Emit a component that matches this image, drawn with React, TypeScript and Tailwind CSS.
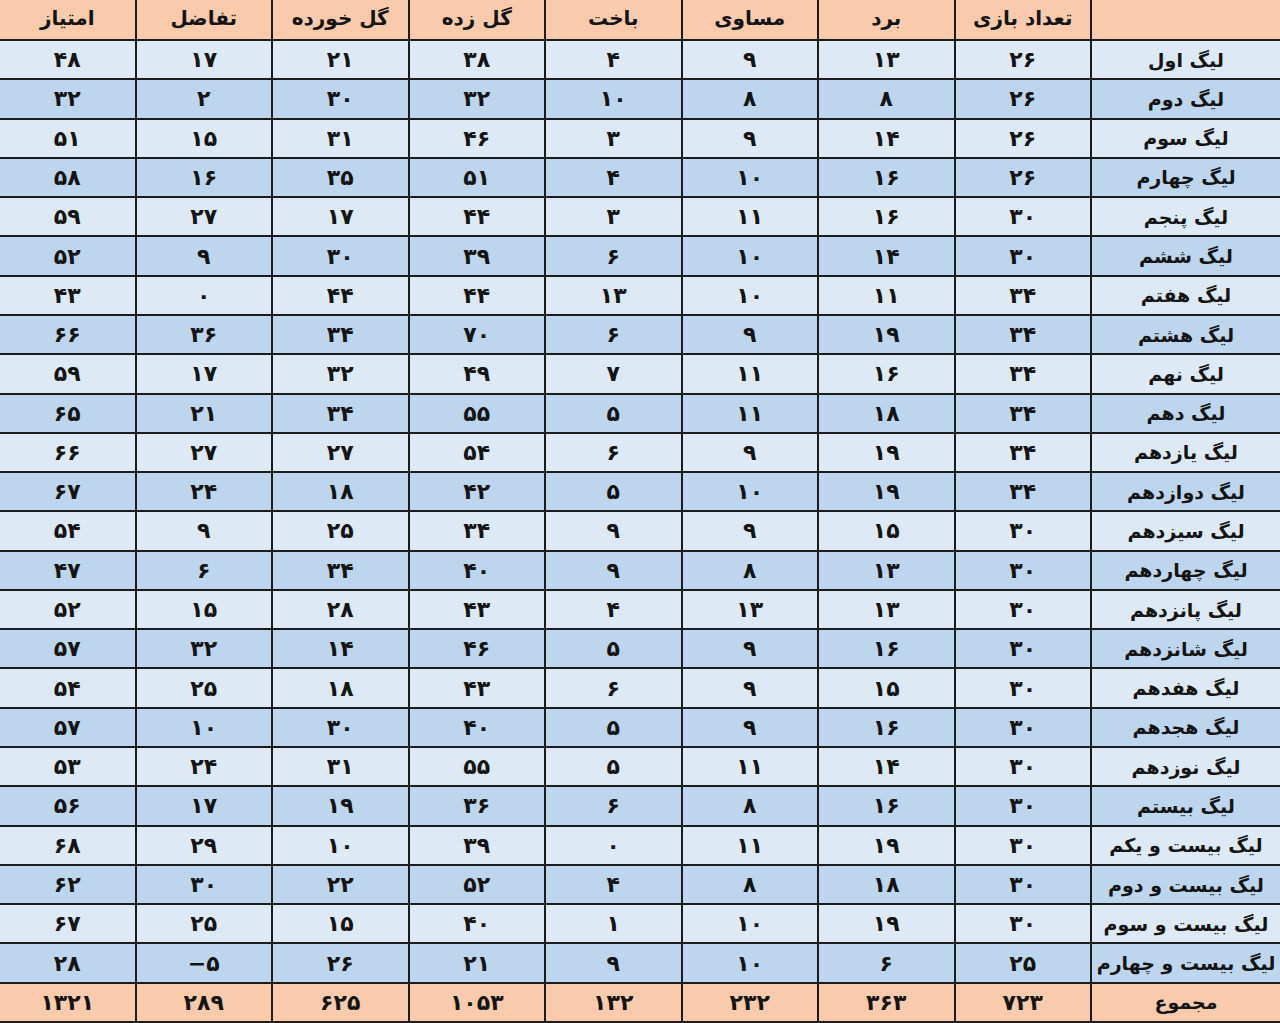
import React from "react";

const toFa = (v: string | number) =>
  String(v).replace(/[0-9]/g, (d) => "۰۱۲۳۴۵۶۷۸۹"[Number(d)]).replace("-", "−");

const headers = ["", "تعداد بازی", "برد", "مساوی", "باخت", "گل زده", "گل خورده", "تفاضل", "امتیاز"];

const rows: (string | number)[][] = [
  ["لیگ اول", 26, 13, 9, 4, 38, 21, 17, 48],
  ["لیگ دوم", 26, 8, 8, 10, 32, 30, 2, 32],
  ["لیگ سوم", 26, 14, 9, 3, 46, 31, 15, 51],
  ["لیگ چهارم", 26, 16, 10, 4, 51, 35, 16, 58],
  ["لیگ پنجم", 30, 16, 11, 3, 44, 17, 27, 59],
  ["لیگ ششم", 30, 14, 10, 6, 39, 30, 9, 52],
  ["لیگ هفتم", 34, 11, 10, 13, 44, 44, 0, 43],
  ["لیگ هشتم", 34, 19, 9, 6, 70, 34, 36, 66],
  ["لیگ نهم", 34, 16, 11, 7, 49, 32, 17, 59],
  ["لیگ دهم", 34, 18, 11, 5, 55, 34, 21, 65],
  ["لیگ یازدهم", 34, 19, 9, 6, 54, 27, 27, 66],
  ["لیگ دوازدهم", 34, 19, 10, 5, 42, 18, 24, 67],
  ["لیگ سیزدهم", 30, 15, 9, 9, 34, 25, 9, 54],
  ["لیگ چهاردهم", 30, 13, 8, 9, 40, 34, 6, 47],
  ["لیگ پانزدهم", 30, 13, 13, 4, 43, 28, 15, 52],
  ["لیگ شانزدهم", 30, 16, 9, 5, 46, 14, 32, 57],
  ["لیگ هفدهم", 30, 15, 9, 6, 43, 18, 25, 54],
  ["لیگ هجدهم", 30, 16, 9, 5, 40, 30, 10, 57],
  ["لیگ نوزدهم", 30, 14, 11, 5, 55, 31, 24, 53],
  ["لیگ بیستم", 30, 16, 8, 6, 36, 19, 17, 56],
  ["لیگ بیست و یکم", 30, 19, 11, 0, 39, 10, 29, 68],
  ["لیگ بیست و دوم", 30, 18, 8, 4, 52, 22, 30, 62],
  ["لیگ بیست و سوم", 30, 19, 10, 1, 40, 15, 25, 67],
  ["لیگ بیست و چهارم", 25, 6, 10, 9, 21, 26, -5, 28],
];

const total = ["مجموع", 723, 363, 232, 132, 1053, 625, 289, 1321];

function Cell({ value, bg, head }: { value: string | number; bg: string; head?: boolean }) {
  const isNum = typeof value === "number";
  const text = isNum ? toFa(value) : value;
  const size = head ? "text-[20px] pb-[3px]" : isNum ? "text-[22px] pt-[1px]" : "text-[19px] pt-[1px]";
  return (
    <div className={`${bg} ${size} flex items-center justify-center`}>
      <span dir={isNum ? "ltr" : undefined} className="leading-none">
        {text}
      </span>
    </div>
  );
}

export default function App() {
  return (
    <div
      dir="rtl"
      className="w-[1280px] h-[1023px] bg-[#1c1c1c] pb-[2px] overflow-hidden"
      style={{ fontFamily: '"DejaVu Sans", sans-serif' }}
    >
      <div className="grid h-full grid-cols-[188px_repeat(8,minmax(0,1fr))] grid-rows-[39px_repeat(25,minmax(0,1fr))] gap-[2px] font-bold text-[#141414]">
        {headers.map((h, i) => (
          <Cell key={`h${i}`} value={h} bg="bg-[#f9cbac]" head />
        ))}
        {rows.map((r, ri) =>
          r.map((v, ci) => (
            <Cell key={`r${ri}c${ci}`} value={v} bg={ri % 2 === 0 ? "bg-[#ddeaf6]" : "bg-[#bdd6ee]"} />
          ))
        )}
        {total.map((v, i) => (
          <Cell key={`t${i}`} value={v} bg="bg-[#f9cbac]" />
        ))}
      </div>
    </div>
  );
}
